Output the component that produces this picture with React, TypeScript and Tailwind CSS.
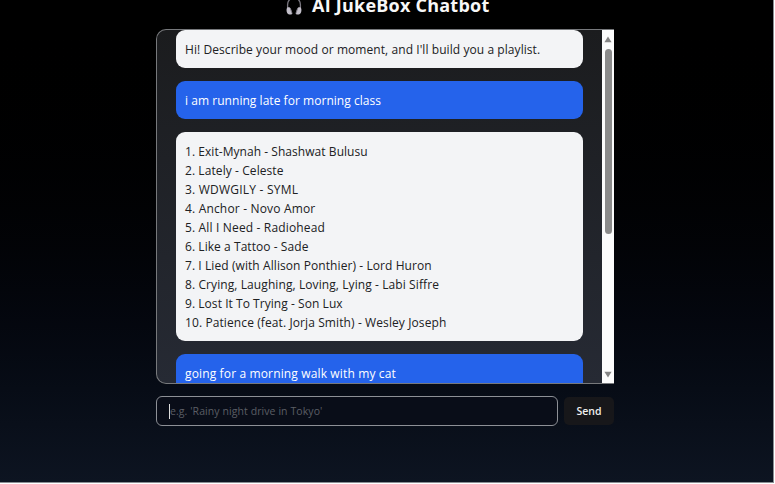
const songs = [
  { text: '1. Exit-Mynah - Shashwat Bulusu', tracking: 'tracking-[0.05px]' },
  { text: '2. Lately - Celeste', tracking: 'tracking-[0.08px]' },
  { text: '3. WDWGILY - SYML', tracking: 'tracking-[0.22px]' },
  { text: '4. Anchor - Novo Amor', tracking: 'tracking-[0.17px]' },
  { text: '5. All I Need - Radiohead', tracking: 'tracking-[0.16px]' },
  { text: '6. Like a Tattoo - Sade', tracking: 'tracking-[0.06px]' },
  { text: '7. I Lied (with Allison Ponthier) - Lord Huron', tracking: 'tracking-[0.08px]' },
  { text: '8. Crying, Laughing, Loving, Lying - Labi Siffre', tracking: 'tracking-[0.09px]' },
  { text: '9. Lost It To Trying - Son Lux', tracking: 'tracking-[0.05px]' },
  { text: '10. Patience (feat. Jorja Smith) - Wesley Joseph', tracking: 'tracking-[0.1px]' },
];

function Headphones() {
  return (
    <svg className="h-[19px] w-[18px] shrink-0" viewBox="0 0 18 19" fill="none">
      <path d="M2.6 13V8.5a6.4 6.8 0 0 1 12.8 0V13" stroke="#77747d" strokeWidth="1.3" />
      <path d="M2.3 11.6C3.6 10.8 5 11.2 5.6 12.6l1.5 4.2c.3 1-.4 1.8-1.4 1.8H4.4C2 18.6.6 14 2.3 11.6Z" fill="#c3bfca" />
      <path d="M15.7 11.6c-1.3-.8-2.7-.4-3.3 1l-1.5 4.2c-.3 1 .4 1.8 1.4 1.8h1.3c2.4 0 3.8-4.6 2.1-7Z" fill="#c3bfca" />
      <path d="m5.3 12.2 1.8 5.4M12.7 12.2l-1.8 5.4" stroke="#77747d" strokeWidth=".9" />
    </svg>
  );
}

function Scrollbar() {
  return (
    <div className="flex w-[12px] shrink-0 flex-col items-center bg-[#fcfcfc]">
      <svg className="mt-[6px] h-[7px] w-[8px] shrink-0" viewBox="0 0 8 7">
        <path d="M4 .6 7.6 6.2H.4Z" fill="#858585" />
      </svg>
      <div className="mt-[6px] h-[185px] w-[7px] shrink-0 rounded-full bg-[#8b8b8b]" />
      <svg className="mt-auto mb-[5px] h-[7px] w-[8px] shrink-0" viewBox="0 0 8 7">
        <path d="M4 6.4.4.8h7.2Z" fill="#858585" />
      </svg>
    </div>
  );
}

export default function App() {
  return (
    <div className="h-[484px] w-[775px] overflow-hidden bg-white pr-px pb-px font-['Open_Sans','Noto_Sans',sans-serif]">
      <div className="flex h-full flex-col border-r border-b border-[#8b8e94] bg-linear-to-b from-black to-[#0d1421] pl-[156px]">
        <header className="flex h-[29px] shrink-0 items-start pl-[129px]">
          <div className="mt-[-4px] flex">
            <Headphones />
          </div>
          <h1 className="mt-[-7px] ml-[9px] text-[18px] leading-[24px] font-bold tracking-[0.23px] whitespace-nowrap text-[#f7f7f7]">
            AI JukeBox Chatbot
          </h1>
        </header>
        <main className="flex h-[355px] w-[458px] shrink-0 overflow-hidden rounded-l-[10px] border border-r-0 border-[#77797c] bg-linear-to-b from-[#1b1c1e] to-[#262a34]">
          <div className="flex min-w-0 flex-1 flex-col gap-[13px] overflow-hidden pr-[19px] pl-[19px] text-[12px] leading-[19.05px] whitespace-nowrap">
            <div className="h-[38px] shrink-0 rounded-[9px] bg-[#f3f4f6] px-[9px] pt-[10px] text-[#202123]">
              <p className="tracking-[0.07px]">Hi! Describe your mood or moment, and I'll build you a playlist.</p>
            </div>
            <div className="h-[38px] shrink-0 rounded-[9px] bg-[#2563eb] px-[9px] pt-[10px] text-white">
              <p className="tracking-[0.04px]">i am running late for morning class</p>
            </div>
            <div className="h-[209px] shrink-0 rounded-[9px] bg-[#f3f4f6] px-[9px] pt-[9.9px] text-[#202123]">
              {songs.map((song) => (
                <p key={song.text} className={song.tracking}>
                  {song.text}
                </p>
              ))}
            </div>
            <div className="h-[38px] shrink-0 rounded-[9px] bg-[#2563eb] px-[9px] pt-[10px] text-white">
              <p className="tracking-[0.14px]">going for a morning walk with my cat</p>
            </div>
          </div>
          <Scrollbar />
        </main>
        <form className="mt-[12px] flex w-[458px] shrink-0 items-center gap-[6px]">
          <div className="flex h-[30px] w-[402px] items-center rounded-[6px] border border-[#8d9096] bg-[#090d18] pl-[12px]">
            <span className="h-[15px] w-px bg-[#dddddd]" />
            <span className="pt-px text-[10.5px] tracking-[0.08px] whitespace-nowrap text-[#5b5e65]">
              e.g. 'Rainy night drive in Tokyo'
            </span>
          </div>
          <button type="button" className="h-[28px] w-[50px] rounded-[5px] bg-[#17171a] pt-px text-[10.5px] font-semibold text-[#f0f0f0]">
            Send
          </button>
        </form>
      </div>
    </div>
  );
}
